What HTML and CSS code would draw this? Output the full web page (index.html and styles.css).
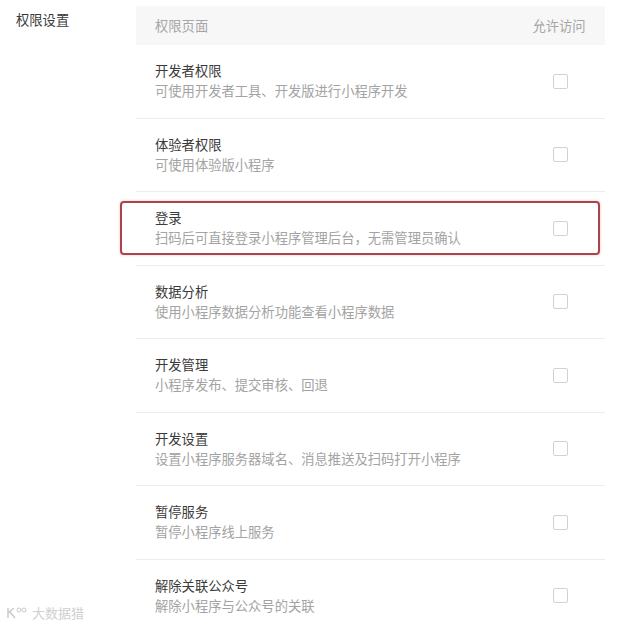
FILE: index.html
```html
<!DOCTYPE html>
<html>
<head>
    <title>权限设置</title>
    <meta name="viewport" content="width=device-width, initial-scale=1.0">
    <link rel="stylesheet" href="styles.css">
</head>
<body>
    <div class="page">
        <div class="label">权限设置</div>

        <div class="table">
            <div class="head">
                <span>权限页面</span>
                <span class="col-allow">允许访问</span>
            </div>

            <div class="row">
                <div class="info">
                    <div class="title">开发者权限</div>
                    <div class="desc">可使用开发者工具、开发版进行小程序开发</div>
                </div>
                <div class="col-allow"><span class="check"></span></div>
            </div>

            <div class="row">
                <div class="info">
                    <div class="title">体验者权限</div>
                    <div class="desc">可使用体验版小程序</div>
                </div>
                <div class="col-allow"><span class="check"></span></div>
            </div>

            <div class="row">
                <!-- highlight box drawn over the row -->
                <div class="mark"></div>
                <div class="info">
                    <div class="title">登录</div>
                    <div class="desc">扫码后可直接登录小程序管理后台，无需管理员确认</div>
                </div>
                <div class="col-allow"><span class="check"></span></div>
            </div>

            <div class="row">
                <div class="info">
                    <div class="title">数据分析</div>
                    <div class="desc">使用小程序数据分析功能查看小程序数据</div>
                </div>
                <div class="col-allow"><span class="check"></span></div>
            </div>

            <div class="row">
                <div class="info">
                    <div class="title">开发管理</div>
                    <div class="desc">小程序发布、提交审核、回退</div>
                </div>
                <div class="col-allow"><span class="check"></span></div>
            </div>

            <div class="row">
                <div class="info">
                    <div class="title">开发设置</div>
                    <div class="desc">设置小程序服务器域名、消息推送及扫码打开小程序</div>
                </div>
                <div class="col-allow"><span class="check"></span></div>
            </div>

            <div class="row">
                <div class="info">
                    <div class="title">暂停服务</div>
                    <div class="desc">暂停小程序线上服务</div>
                </div>
                <div class="col-allow"><span class="check"></span></div>
            </div>

            <div class="row">
                <div class="info">
                    <div class="title">解除关联公众号</div>
                    <div class="desc">解除小程序与公众号的关联</div>
                </div>
                <div class="col-allow"><span class="check"></span></div>
            </div>
        </div>
    </div>

    <div class="watermark">
        <svg width="22" height="14" viewBox="0 0 22 14">
            <path d="M2 2 L2 12 M2 7 L8 2 M4 6 L9 12" fill="none" stroke="#c8c8c8" stroke-width="1.4"/>
            <circle cx="13" cy="4" r="2" fill="none" stroke="#c8c8c8" stroke-width="1"/>
            <circle cx="18" cy="4" r="2" fill="none" stroke="#c8c8c8" stroke-width="1"/>
        </svg>
        <span>大数据猎</span>
    </div>
</body>
</html>
```

FILE: styles.css
```css
body {
    margin: 0;
    font-family: "Noto Sans CJK SC", "Noto Sans", sans-serif;
    background: #fff;
    color: #353535;
}

.page {
    display: flex;
    padding-top: 6px;
}

.label {
    width: 120px;
    padding-left: 16px;
    font-size: 13.3px;
    line-height: 28px;
    color: #3a3a3a;
}

.table {
    width: 469px;
}

.head {
    display: flex;
    justify-content: space-between;
    align-items: center;
    height: 39px;
    padding: 0 18px 0 19px;
    background: #f7f7f7;
    font-size: 13.3px;
    color: #a6a6a6;
}

.col-allow {
    width: 56px;
    display: flex;
    justify-content: center;
    white-space: nowrap;
}

.row {
    position: relative;
    display: flex;
    justify-content: space-between;
    align-items: center;
    height: 72.5px;
    padding: 0 18px 0 19px;
    border-bottom: 1px solid #ececec;
}

.row:last-child {
    border-bottom: none;
}

.title {
    font-size: 13.3px;
    line-height: 20px;
    color: #3a3a3a;
}

.desc {
    font-size: 13.3px;
    line-height: 20px;
    color: #a3a3a3;
}

.check {
    display: block;
    width: 13px;
    height: 13px;
    margin-left: 3px;
    border: 1px solid #d2d2d2;
    border-radius: 2px;
}

.mark {
    position: absolute;
    left: -16px;
    right: 5px;
    top: 9px;
    height: 50px;
    border: 2px solid #a9444a;
    border-radius: 4px;
    box-shadow: 0 0 3px rgba(200, 70, 70, 0.35);
}

.watermark {
    position: absolute;
    left: 6px;
    top: 603px;
    display: flex;
    align-items: center;
    gap: 4px;
    font-size: 13px;
    color: #cfcfcf;
}
```
